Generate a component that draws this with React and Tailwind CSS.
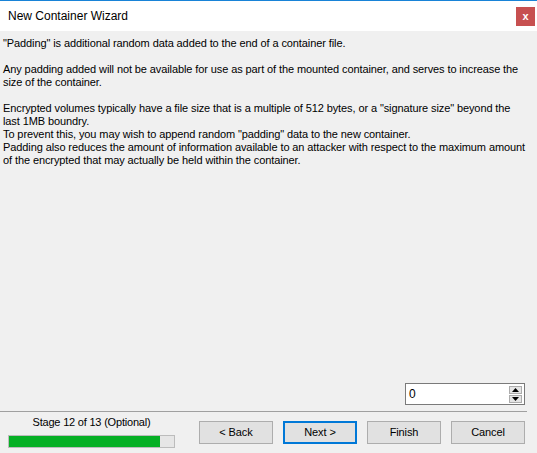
import React from 'react';

function WinButton({ children, focused }) {
    return (
        <button
            className={
                'w-[74px] h-[23px] bg-[#e1e1e1] text-[11px] tracking-[-0.1px] text-black flex items-center justify-center ' +
                (focused ? 'border-2 border-[#0078d7]' : 'border border-[#adadad]')
            }
        >
            {children}
        </button>
    );
}

export default function App() {
    return (
        <div
            className="w-[537px] h-[453px] bg-[#f0f0f0] flex flex-col border-t border-[#1883d7] overflow-hidden"
            style={{ fontFamily: '"Liberation Sans", Arial, sans-serif' }}
        >
            {/* title bar */}
            <div className="h-[30px] bg-white flex items-center justify-between pl-[8px] pr-[2px] shrink-0">
                <span className="text-[12px] text-black">New Container Wizard</span>
                <div className="w-[19px] h-[19px] bg-[#c75050] flex items-center justify-center text-white text-[11px] font-bold leading-none">
                    x
                </div>
            </div>

            {/* description */}
            <div className="px-[3px] pt-[6px] text-[11px] leading-[13px] tracking-[-0.1px] text-black whitespace-nowrap">
                <p>"Padding" is additional random data added to the end of a container file.</p>
                <p className="mt-[13px]">
                    Any padding added will not be available for use as part of the mounted container, and serves to increase the
                    <br />
                    size of the container.
                </p>
                <p className="mt-[13px]">
                    Encrypted volumes typically have a file size that is a multiple of 512 bytes, or a "signature size" beyond the
                    <br />
                    last 1MB boundry.
                    <br />
                    To prevent this, you may wish to append random "padding" data to the new container.
                    <br />
                    Padding also reduces the amount of information available to an attacker with respect to the maximum amount
                    <br />
                    of the encrypted that may actually be held within the container.
                </p>
            </div>

            <div className="flex-1" />

            {/* padding size spin box */}
            <div className="flex justify-end pr-[12px] mb-[6px]">
                <div className="w-[120px] h-[22px] bg-white border border-[#7a7a7a] flex items-center justify-between pl-[3px] pr-[2px]">
                    <span className="text-[12px] text-black">0</span>
                    <div className="flex flex-col gap-[1px]">
                        <div className="w-[13px] h-[8px] bg-[#e5e5e5] border border-[#acacac] flex items-center justify-center">
                            <svg width="7" height="4" viewBox="0 0 7 4"><path d="M0 4 L3.5 0 L7 4 Z" fill="#000" /></svg>
                        </div>
                        <div className="w-[13px] h-[8px] bg-[#e5e5e5] border border-[#acacac] flex items-center justify-center">
                            <svg width="7" height="4" viewBox="0 0 7 4"><path d="M0 0 L7 0 L3.5 4 Z" fill="#000" /></svg>
                        </div>
                    </div>
                </div>
            </div>

            {/* separator */}
            <div className="w-[527px] h-[1px] bg-[#a0a0a0] shrink-0" />

            {/* footer */}
            <div className="h-[41px] flex pl-[8px] pr-[12px] shrink-0">
                <div className="w-[167px] flex flex-col items-center pt-[3px]">
                    <span className="text-[11px] leading-[14px] tracking-[-0.2px] text-black">Stage 12 of 13 (Optional)</span>
                    <div className="mt-[6px] w-[167px] h-[13px] bg-[#e6e6e6] border border-[#bcbcbc]">
                        <div className="h-full w-[151px] bg-[#06b025]" />
                    </div>
                </div>
                <div className="ml-auto flex gap-[10px] pt-[9px]">
                    <WinButton>&lt; Back</WinButton>
                    <WinButton focused>Next &gt;</WinButton>
                    <WinButton>Finish</WinButton>
                    <WinButton>Cancel</WinButton>
                </div>
            </div>
        </div>
    );
}
